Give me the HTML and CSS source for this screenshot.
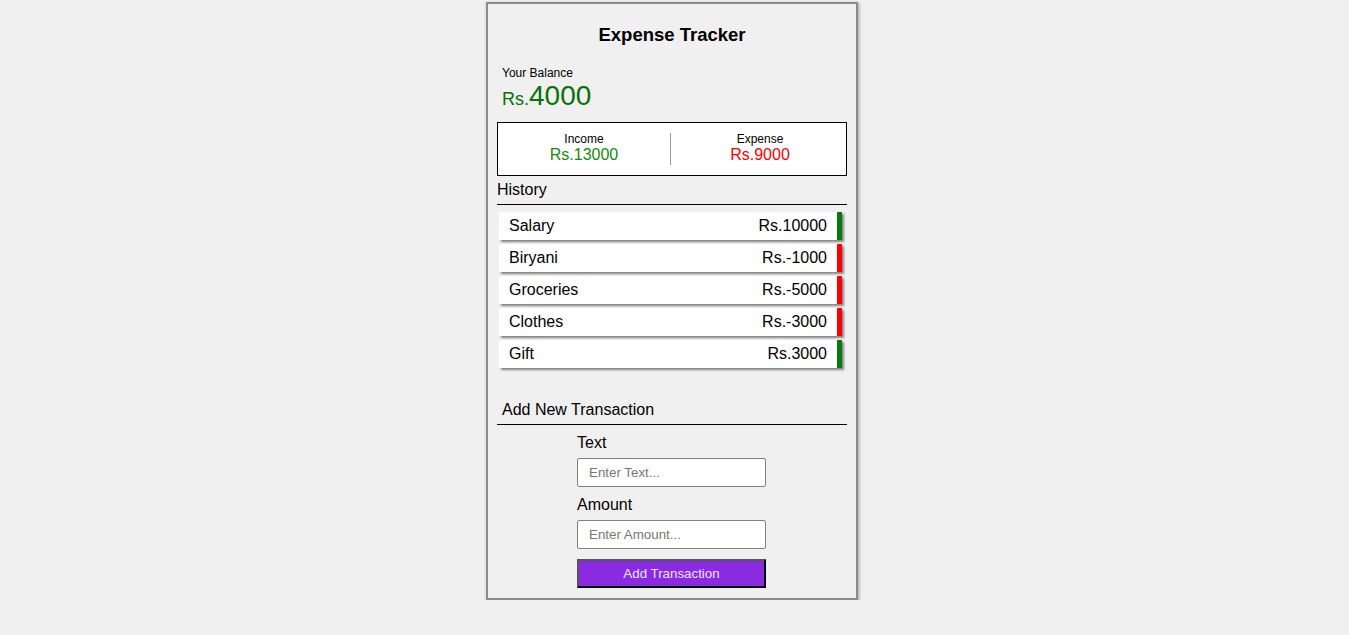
FILE: index.html
```html
<!DOCTYPE html>
<html>
<head>
<meta charset="utf-8">
<title>Expense Tracker</title>
<link rel="stylesheet" href="styles.css">
</head>
<body>
<div class="container">
  <h2 class="title">Expense Tracker</h2>
  <div class="balance">
    <div class="balance-label">Your Balance</div>
    <div class="balance-value"><span class="cur">Rs.</span>4000</div>
  </div>
  <div class="summary">
    <div class="col">
      <div class="col-label">Income</div>
      <div class="col-value plus">Rs.13000</div>
    </div>
    <div class="divider"></div>
    <div class="col">
      <div class="col-label">Expense</div>
      <div class="col-value minus">Rs.9000</div>
    </div>
  </div>
  <h3 class="section">History</h3>
  <ul class="list">
    <li class="item inc"><span>Salary</span><span>Rs.10000</span></li>
    <li class="item exp"><span>Biryani</span><span>Rs.-1000</span></li>
    <li class="item exp"><span>Groceries</span><span>Rs.-5000</span></li>
    <li class="item exp"><span>Clothes</span><span>Rs.-3000</span></li>
    <li class="item inc"><span>Gift</span><span>Rs.3000</span></li>
  </ul>
  <h3 class="section indent">Add New Transaction</h3>
  <form class="form">
    <label class="lbl" for="text">Text</label>
    <input class="inp" id="text" type="text" placeholder="Enter Text...">
    <label class="lbl second" for="amount">Amount</label>
    <input class="inp" id="amount" type="text" placeholder="Enter Amount...">
    <button class="btn" type="button">Add Transaction</button>
  </form>
</div>
</body>
</html>
```
FILE: styles.css
```css
* { box-sizing: border-box; }
html, body { margin: 0; padding: 0; }
body {
  background: #f0f0f0;
  font-family: "Liberation Sans", Arial, sans-serif;
  color: #000;
  display: flex;
  justify-content: center;
  padding-right: 5px;
}
.container {
  width: 372px;
  margin-top: 2px;
  border: 2px solid #8c8c8c;
  box-shadow: 1px 1px 3px rgba(0,0,0,0.35);
  padding: 19px 9px 10px 9px;
  background: #f0f0f0;
}
.title {
  margin: 0;
  font-size: 18.5px;
  line-height: 23px;
  font-weight: bold;
  text-align: center;
}
.balance {
  margin-top: 20px;
  padding-left: 5px;
}
.balance-label {
  font-size: 12px;
  line-height: 14px;
}
.balance-value {
  font-size: 28px;
  line-height: 31px;
  height: 31px;
  color: #087008;
}
.balance-value .cur { font-size: 18px; line-height: 1; }
.summary {
  margin-top: 11px;
  height: 54px;
  border: 1px solid #000;
  background: #fff;
  display: flex;
  align-items: center;
}
.col {
  flex: 1;
  height: 100%;
  padding-top: 9px;
  text-align: center;
}
.col-label { font-size: 12px; line-height: 14px; }
.col-value { font-size: 16px; line-height: 18px; }
.plus { color: #138a13; }
.minus { color: #ff0000; }
.divider {
  width: 1px;
  height: 32px;
  margin-right: 3px;
  background: #9a9a9a;
}
.section {
  margin: 5px 0 0 0;
  font-size: 16px;
  line-height: 18px;
  font-weight: normal;
  padding-bottom: 5px;
  border-bottom: 1px solid #000;
}
.section.indent {
  margin-top: 33px;
  padding-left: 5px;
}
.list {
  list-style: none;
  margin: 7px 5px 0 2px;
  padding: 0;
  display: flex;
  flex-direction: column;
  gap: 4px;
}
.item {
  height: 28px;
  background: #fff;
  display: flex;
  justify-content: space-between;
  align-items: center;
  font-size: 16px;
  padding: 0 10px;
  box-shadow: 2px 2px 2px #858585;
  border-right: 5px solid;
}
.item.inc { border-right-color: #087a08; }
.item.exp { border-right-color: #ff0000; }
.form {
  width: 189px;
  margin: 9px 0 0 80px;
  display: flex;
  flex-direction: column;
}
.lbl {
  font-size: 16px;
  line-height: 18px;
}
.lbl.second { margin-top: 9px; }
.inp {
  margin-top: 6px;
  height: 29px;
  width: 100%;
  border: 1px solid #808080;
  border-radius: 2px;
  padding: 0 11px;
  font-family: "Liberation Sans", Arial, sans-serif;
  font-size: 13.33px;
  background: #fff;
}
.inp::placeholder { color: #777; }
.btn {
  margin-top: 10px;
  height: 29px;
  width: 100%;
  background: #8a2be2;
  color: #ece4ff;
  border: 2px solid;
  border-color: #555 #000 #000 #555;
  font-family: "Liberation Sans", Arial, sans-serif;
  font-size: 13.33px;
  padding: 0;
}
```
